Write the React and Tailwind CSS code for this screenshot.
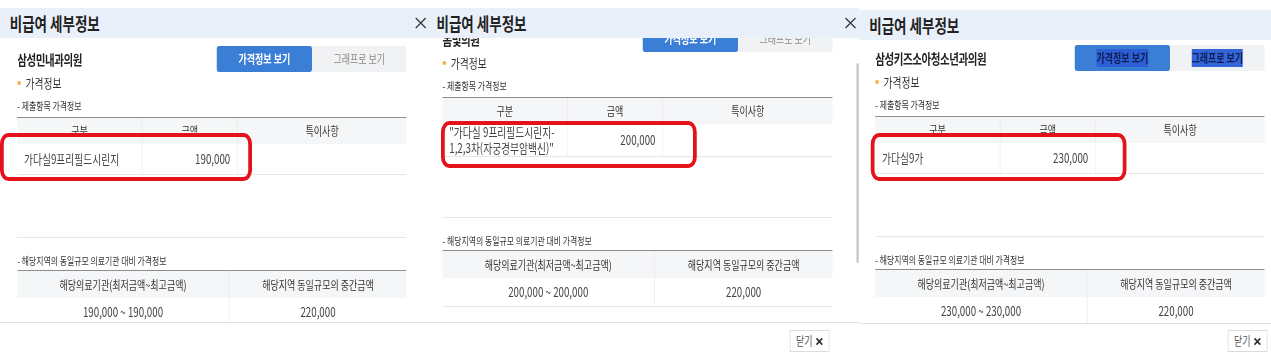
import React from 'react';

// Three captures of the same modal, squeezed sideways in the reference.
const panels = [
  {
    key: 'p1',
    width: 'w-[573px]',
    headerTop: 'pt-[8px]',
    titlePad: 'pl-[13px] pr-[4px]',
    showClose: true,
    bodyHeight: 'h-[284px]',
    bodyPad: 'pl-[23px] pr-[31px]',
    shift: 'pt-[8px]',
    scrollbar: false,
    name: '삼성민내과의원',
    item: ['가다실9프리필드시린지'],
    amount: '190,000',
    range: '190,000 ~ 190,000',
    red: 'top-[16px] left-[-23px] h-[48px] w-[336px]',
    footerPad: 'pt-[7px] pr-[40px]',
    footerButton: false,
    selected: false,
  },
  {
    key: 'p2',
    width: 'w-[573px]',
    headerTop: 'pt-[8px]',
    titlePad: 'pl-[9px] pr-[4px]',
    showClose: true,
    bodyHeight: 'h-[284px]',
    bodyPad: 'pl-[17px] pr-[32px]',
    shift: '-mt-[12px]',
    scrollbar: true,
    name: '봄빛의원',
    item: ['"가다실 9프리필드시린지-', '1,2,3차(자궁경부암백신)"'],
    amount: '200,000',
    range: '200,000 ~ 200,000',
    red: 'top-[24px] left-[-2px] h-[47px] w-[341px]',
    footerPad: 'pt-[7px] pr-[40px]',
    footerButton: true,
    selected: false,
  },
  {
    key: 'p3',
    width: 'w-[549px]',
    headerTop: 'pt-[10px]',
    titlePad: 'pl-[13px] pr-[4px]',
    showClose: false,
    bodyHeight: 'h-[283px]',
    bodyPad: 'pl-[21px] pr-[9px]',
    shift: 'pt-[5px]',
    scrollbar: false,
    name: '삼성키즈소아청소년과의원',
    item: ['가다실9가'],
    amount: '230,000',
    range: '230,000 ~ 230,000',
    red: 'top-[17px] left-[-6px] h-[48px] w-[341px]',
    footerPad: 'pt-[6px] pr-[5px]',
    footerButton: true,
    selected: true,
  },
];

function CloseIcon() {
  return (
    <svg width="16" height="12" viewBox="0 0 12 12" preserveAspectRatio="none">
      <path d="M1 1L11 11M11 1L1 11" stroke="#3a3a3a" strokeWidth="1.3" fill="none" />
    </svg>
  );
}

function SmallX() {
  return (
    <svg width="11" height="9" viewBox="0 0 10 10" preserveAspectRatio="none">
      <path d="M1.5 1.5L8.5 8.5M8.5 1.5L1.5 8.5" stroke="#333" strokeWidth="2" fill="none" />
    </svg>
  );
}

function Panel({ p }) {
  return (
    <div className={`flex h-[360px] shrink-0 flex-col ${p.width}`}>
      <div className={p.headerTop}>
        <div className={`flex h-[30px] items-center justify-between bg-[#e9f0f9] ${p.titlePad}`}>
          <span className="text-[18px] font-semibold text-[#222]">비급여 세부정보</span>
          {p.showClose && <CloseIcon />}
        </div>
      </div>

      <div className={`flex overflow-hidden ${p.bodyHeight}`}>
        <div className={`flex-1 overflow-hidden ${p.bodyPad}`}>
          <div className={`pb-4 ${p.shift}`}>
            <div className="flex h-[26px] items-center justify-between">
              <span className="text-[14px] font-bold tracking-[-0.04em] text-[#222]">{p.name}</span>
              <div className="flex">
                <div className="flex h-[26px] w-[127px] items-center justify-center rounded-[3px] bg-[#3a7fd5] text-[12px] font-bold text-white">
                  <span className={p.selected ? 'bg-[#2c5fd3] text-[#0f1d55]' : ''}>가격정보 보기</span>
                </div>
                <div className="flex h-[26px] w-[126px] items-center justify-center bg-[#f1f2f4] text-[12px] text-[#8a8a8a]">
                  <span className={p.selected ? 'bg-[#3465d8] font-bold text-[#0f1d55]' : ''}>그래프로 보기</span>
                </div>
              </div>
            </div>

            <div className="mt-[2px] flex h-[18px] items-center gap-[6px] text-[13px] text-[#333]">
              <span className="h-[4px] w-[5px] rounded-full bg-[#f5b547]" />
              가격정보
            </div>

            <div className="mt-[7px] flex h-[14px] items-center text-[10.5px] text-[#333]">- 제출항목 가격정보</div>

            <div className="relative mt-[4px] h-[121px] border-b border-[#e6e6e6]">
              <div className="flex h-[27px] border-t border-[#8e8e8e] bg-[#f5f6f8] text-[12px] text-[#333]">
                <div className="flex w-[167px] items-center justify-center border-r border-[#e8e8e8]">구분</div>
                <div className="flex w-[127px] items-center justify-center border-r border-[#e8e8e8]">금액</div>
                <div className="flex flex-1 items-center justify-center">특이사항</div>
              </div>
              <div className="flex min-h-[31px] border-b border-[#e6e6e6] text-[13px] leading-[16px] text-[#444]">
                <div className="flex w-[167px] flex-col justify-center border-r border-[#f0f0f0] pl-[9px]">
                  {p.item.map((line) => (
                    <span key={line}>{line}</span>
                  ))}
                </div>
                <div className="flex w-[127px] items-center justify-end border-r border-[#f0f0f0] pr-[9px]">{p.amount}</div>
                <div className="flex-1" />
              </div>
              <div className={`absolute rounded-[11px] border-x-[5px] border-y-4 border-[#e5121b] ${p.red}`} />
            </div>

            <div className="mt-[16px] flex h-[14px] items-center text-[10.5px] text-[#333]">
              - 해당지역의 동일규모 의료기관 대비 가격정보
            </div>

            <div className="mt-[2px]">
              <div className="flex h-[28px] border-t border-[#8e8e8e] bg-[#f5f6f8] text-[12px] text-[#333]">
                <div className="flex w-[283px] items-center justify-center border-r border-[#ebebeb]">해당의료기관(최저금액~최고금액)</div>
                <div className="flex flex-1 items-center justify-center">해당지역 동일규모의 중간금액</div>
              </div>
              <div className="flex h-[29px] border-b border-[#e6e6e6] text-[13px] text-[#444]">
                <div className="flex w-[283px] items-center justify-center border-r border-[#ebebeb]">{p.range}</div>
                <div className="flex flex-1 items-center justify-center">220,000</div>
              </div>
            </div>
          </div>
        </div>
        {p.scrollbar && (
          <div className="w-[4px] shrink-0">
            <div className="mt-[25px] h-[200px] w-[3px] rounded-full bg-[#c6c6c6]" />
          </div>
        )}
      </div>

      <div className={`flex flex-1 justify-end border-t border-[#e0e0e0] ${p.footerPad}`}>
        {p.footerButton && (
          <button className="flex h-[22px] w-[53px] items-center justify-center gap-[3px] border border-[#dcdcdc] bg-white text-[12px] text-[#555]">
            닫기
            <SmallX />
          </button>
        )}
      </div>
    </div>
  );
}

export default function App() {
  return (
    <div className="h-[360px] w-[1271px] overflow-hidden bg-white font-['Noto_Sans_CJK_KR','Noto_Sans',sans-serif]">
      <div className="flex w-[1695px] origin-top-left scale-x-75">
        {panels.map((p) => (
          <Panel key={p.key} p={p} />
        ))}
      </div>
    </div>
  );
}
